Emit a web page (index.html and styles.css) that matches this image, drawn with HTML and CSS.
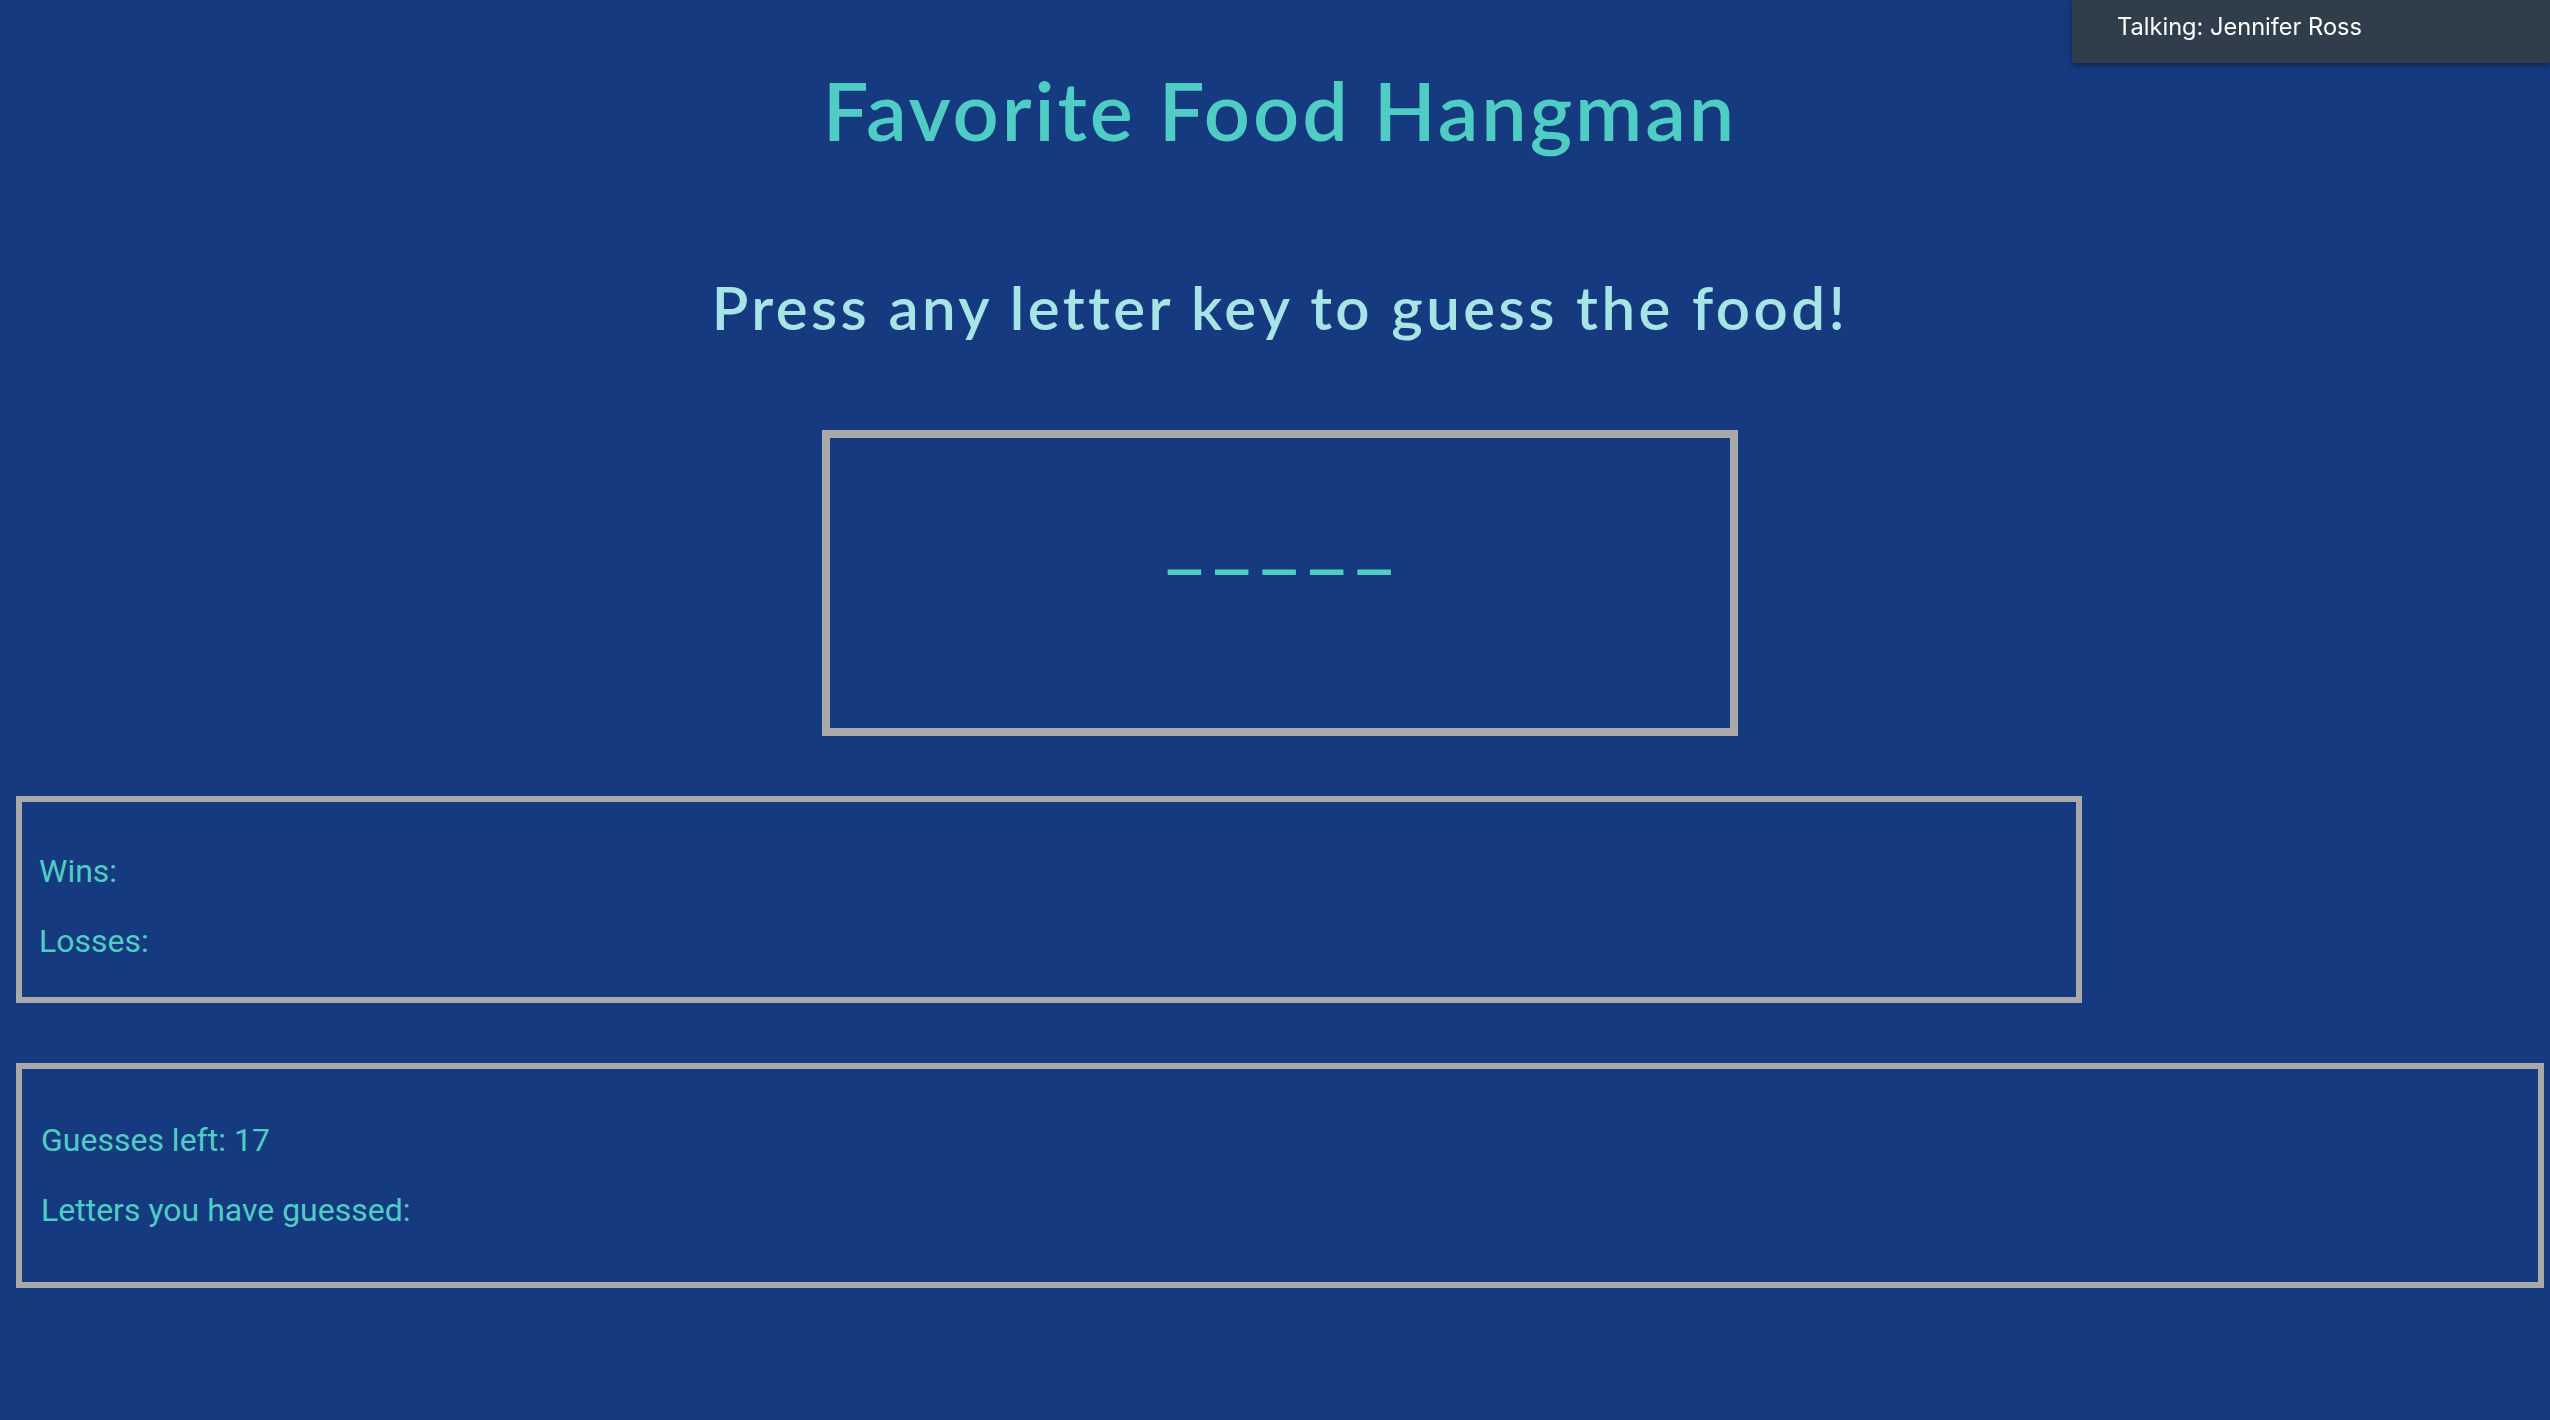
FILE: index.html
```html
<!DOCTYPE html>
<html lang="en">
<head>
<meta charset="utf-8">
<title>Favorite Food Hangman</title>
<link rel="stylesheet" href="styles.css">
</head>
<body>
<div class="page">
  <h1 class="title">Favorite Food Hangman</h1>
  <h2 class="subtitle">Press any letter key to guess the food!</h2>
  <div class="word-box">
    <div class="word">_ _ _ _ _</div>
  </div>
  <div class="score-box">
    <p class="stat">Wins:</p>
    <p class="stat">Losses:</p>
  </div>
  <div class="guess-box">
    <p class="stat">Guesses left: 17</p>
    <p class="stat">Letters you have guessed:</p>
  </div>
</div>
<div class="talking">Talking: Jennifer Ross</div>
</body>
</html>
```

FILE: styles.css
```css
html, body {
  margin: 0;
  padding: 0;
  overflow: hidden;
  background: #163a80;
}

.page {
  width: 2560px;
  box-sizing: border-box;
  padding: 61px 16px 0;
  display: flex;
  flex-direction: column;
}

.title {
  margin: 0;
  text-align: center;
  font-family: Lato, "Noto Sans", sans-serif;
  font-weight: 600;
  font-size: 81px;
  line-height: 1.2;
  letter-spacing: 2.9px;
  color: #4fcdc4;
}

.subtitle {
  margin: 113px 0 0;
  text-align: center;
  font-family: Lato, "Noto Sans", sans-serif;
  font-weight: 600;
  font-size: 60px;
  line-height: 1.2;
  letter-spacing: 3.4px;
  color: #a6e4e6;
}

.word-box {
  align-self: center;
  width: 916px;
  height: 306px;
  box-sizing: border-box;
  margin-top: 87px;
  border: 8px solid #a9a9a9;
  padding-top: 79px;
}

.word {
  text-align: center;
  font-family: "Liberation Sans", Arial, sans-serif;
  font-size: 54px;
  line-height: 1;
  letter-spacing: 1.23px;
  color: #4fcdc4;
  -webkit-text-stroke: 2px #4fcdc4;
}

.score-box {
  width: 2066px;
  box-sizing: border-box;
  margin-top: 60px;
  border: 6px solid #a9a9a9;
  padding: 50px 17px 37px;
  display: flex;
  flex-direction: column;
  gap: 32px;
}

.guess-box {
  box-sizing: border-box;
  margin-top: 60px;
  border: 6px solid #a9a9a9;
  padding: 52px 19px 53px;
  display: flex;
  flex-direction: column;
  gap: 32px;
}

.stat {
  margin: 0;
  font-family: Roboto, "Noto Sans", sans-serif;
  font-size: 32px;
  color: #4fcdc4;
}

.talking {
  position: fixed;
  top: 0;
  right: 0;
  width: 478px;
  height: 63px;
  box-sizing: border-box;
  padding: 12px 0 0 45px;
  background: #2f3e4a;
  box-shadow: 0 2px 6px rgba(0, 0, 0, 0.45);
  font-family: Inter, "Liberation Sans", sans-serif;
  font-size: 23.6px;
  color: #ffffff;
}
```
